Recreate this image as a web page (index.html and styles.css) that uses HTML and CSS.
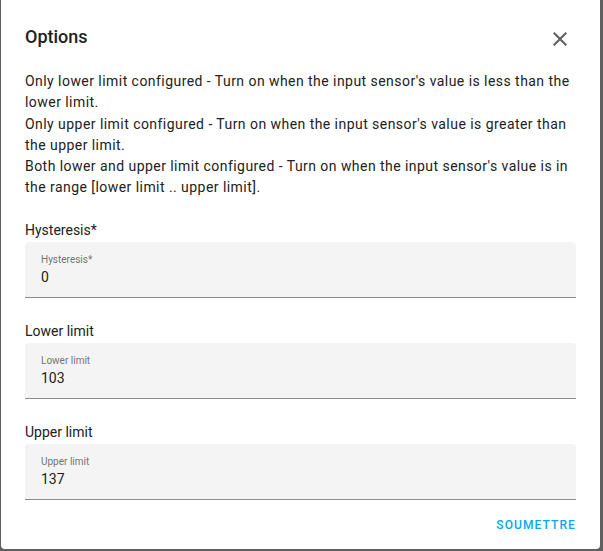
FILE: index.html
```html
<!DOCTYPE html>
<html>
<head>
<meta charset="utf-8">
<link rel="stylesheet" href="styles.css">
</head>
<body>
<div class="dialog">
  <div class="header">
    <h2 class="title">Options</h2>
    <button class="close" aria-label="Close">
      <svg width="24" height="24" viewBox="0 0 24 24"><path d="M19,6.41L17.59,5L12,10.59L6.41,5L5,6.41L10.59,12L5,17.59L6.41,19L12,13.41L17.59,19L19,17.59L13.41,12L19,6.41Z" fill="#5f5f5f"/></svg>
    </button>
  </div>
  <div class="content">
    <p class="desc">Only lower limit configured - Turn on when the input sensor's value is less than the lower limit.<br>Only upper limit configured - Turn on when the input sensor's value is greater than the upper limit.<br>Both lower and upper limit configured - Turn on when the input sensor's value is in the range [lower limit .. upper limit].</p>
    <div class="field">
      <div class="label">Hysteresis*</div>
      <div class="input">
        <span class="float">Hysteresis*</span>
        <span class="value">0</span>
      </div>
    </div>
    <div class="field">
      <div class="label">Lower limit</div>
      <div class="input">
        <span class="float">Lower limit</span>
        <span class="value">103</span>
      </div>
    </div>
    <div class="field">
      <div class="label">Upper limit</div>
      <div class="input">
        <span class="float">Upper limit</span>
        <span class="value">137</span>
      </div>
    </div>
  </div>
  <div class="actions">
    <button class="submit">Soumettre</button>
  </div>
</div>
</body>
</html>
```
FILE: styles.css
```css
html, body {
  margin: 0;
  padding: 0;
}
body {
  background: #606060;
  width: 603px;
  height: 551px;
  overflow: hidden;
  font-family: Roboto, "Liberation Sans", sans-serif;
  color: #212121;
}
.dialog {
  margin-left: 1px;
  width: 599px;
  height: 549px;
  background: #fff;
  border-radius: 0 0 4px 4px;
  box-sizing: border-box;
  display: flex;
  flex-direction: column;
}
.header {
  display: flex;
  align-items: center;
  justify-content: space-between;
  padding: 24px 28px 0 24px;
  height: 24px;
}
.title {
  margin: 0;
  font-size: 18px;
  font-weight: 500;
  line-height: 24px;
  position: relative;
  top: 1px;
}
.close {
  border: 0;
  background: none;
  padding: 0;
  width: 24px;
  height: 24px;
  display: flex;
  cursor: pointer;
  position: relative;
  top: 3px;
}
.content {
  padding: 23px 24px 0 24px;
  display: flex;
  flex-direction: column;
}
.desc {
  margin: 0 0 21px 0;
  font-size: 14px;
  letter-spacing: 0.45px;
  line-height: 21.3px;
}
.field {
  margin-bottom: 23px;
}
.label {
  font-size: 14px;
  line-height: 20px;
  padding-bottom: 2px;
}
.input {
  background: #f4f4f4;
  border-radius: 4px 4px 0 0;
  border-bottom: 1px solid #8c8c8c;
  height: 55px;
  box-sizing: content-box;
  padding: 0 16px;
  display: flex;
  flex-direction: column;
}
.float {
  font-size: 10px;
  color: #757575;
  margin-top: 12px;
  line-height: 12px;
}
.value {
  font-size: 14px;
  line-height: 20px;
  margin-top: 1px;
}
.actions {
  display: flex;
  justify-content: flex-end;
  padding: 0 24px;
  margin-top: -8px;
}
.submit {
  border: 0;
  background: none;
  padding: 0;
  font-family: Roboto, "Liberation Sans", sans-serif;
  font-size: 12px;
  font-weight: 500;
  letter-spacing: 1.1px;
  text-transform: uppercase;
  color: #03a9f4;
  line-height: 20px;
}
```
